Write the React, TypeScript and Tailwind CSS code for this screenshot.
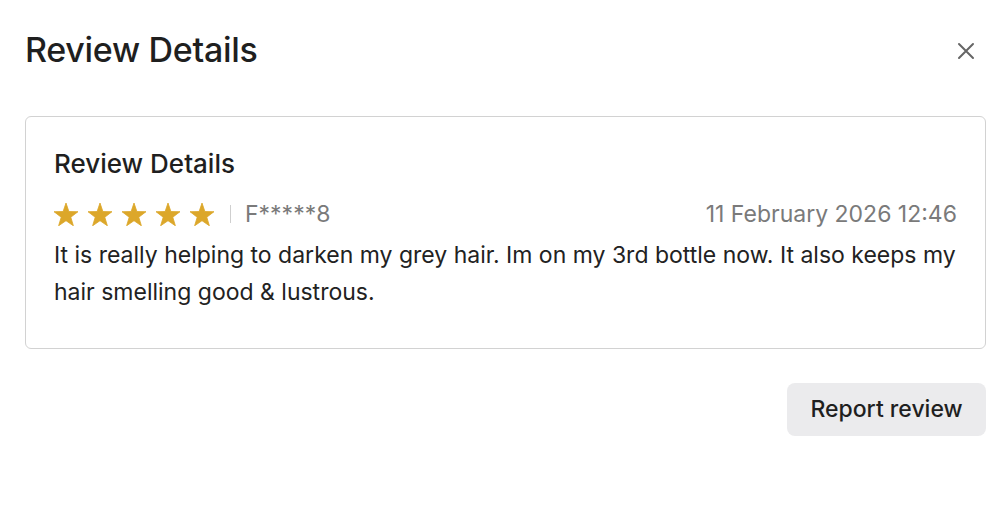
const review = {
  rating: 5,
  author: "F*****8",
  date: "11 February 2026 12:46",
  text: "It is really helping to darken my grey hair. Im on my 3rd bottle now. It also keeps my hair smelling good & lustrous.",
}

function Star() {
  return (
    <svg width="24" height="23" viewBox="0 0 24 23" className="shrink-0">
      <path
        d="M12 0L14.9 8.5L24 8.7L16.8 14.2L19.4 22.8L12 17.7L4.6 22.8L7.2 14.2L0 8.7L9.1 8.5Z"
        fill="#dca72a"
        stroke="#dca72a"
        strokeWidth="0.8"
        strokeLinejoin="round"
      />
    </svg>
  )
}

export default function App() {
  return (
    <div className="min-h-screen w-[1000px] bg-white pl-[25px] pr-[14px] pt-[30px] text-[#1f1f1f] [font-family:Inter,'Liberation_Sans',sans-serif]">
      <div className="flex items-center justify-between">
        <h2 className="text-[34px] font-medium leading-[40px] tracking-[-0.3px]">Review Details</h2>
        <button className="mr-[11px] mt-[2px] text-[#666]">
          <svg width="18" height="18" viewBox="0 0 18 18">
            <path d="M2 2L16 16M16 2L2 16" stroke="currentColor" strokeWidth="2" strokeLinecap="round" />
          </svg>
        </button>
      </div>

      <div className="mt-[46px] rounded-[6px] border border-[#d2d2d2] px-[28px] pt-[30px] pb-[37px]">
        <h3 className="text-[26px] font-medium leading-[34px]">Review Details</h3>
        <div className="mt-[18px] flex h-[30px] items-center justify-between">
          <div className="flex items-center">
            <div className="flex items-center gap-[10px]">
              {Array.from({ length: review.rating }).map((_, i) => (
                <Star key={i} />
              ))}
            </div>
            <span className="ml-[16px] mr-[14px] h-[18px] w-px bg-[#cfcfcf]" />
            <span className="text-[23px] leading-[30px] text-[#7a7a7a]">{review.author}</span>
          </div>
          <span className="text-[23px] leading-[30px] text-[#7a7a7a]">{review.date}</span>
        </div>
        <p className="mt-[8px] text-[23px] leading-[37px] text-[#222]">{review.text}</p>
      </div>

      <div className="mt-[34px] flex justify-end">
        <button className="h-[53px] w-[199px] rounded-[8px] bg-[#ebebed] text-[23px] font-medium text-[#1f1f1f]">
          Report review
        </button>
      </div>
    </div>
  )
}
